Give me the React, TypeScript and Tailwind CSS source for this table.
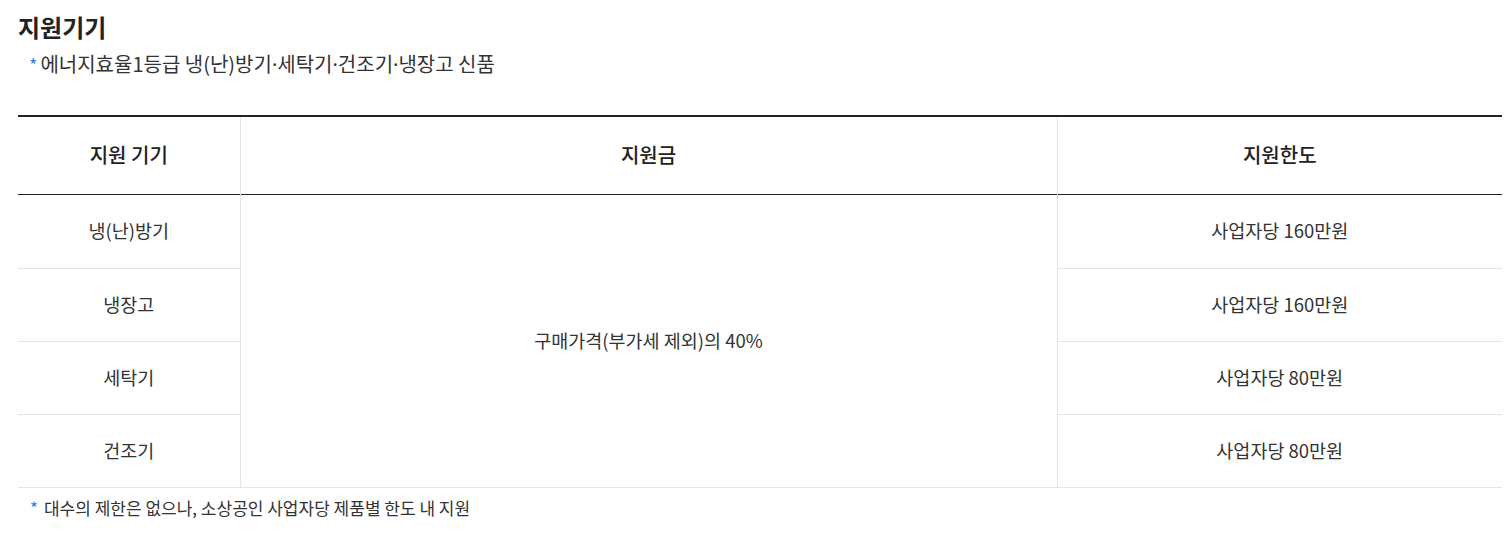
const rows = [
  { device: "냉(난)방기", limit: "사업자당 160만원" },
  { device: "냉장고", limit: "사업자당 160만원" },
  { device: "세탁기", limit: "사업자당 80만원" },
  { device: "건조기", limit: "사업자당 80만원" },
];

// narrow middle dot (the CJK one is full width)
const Dot = () => <span style={{ fontFamily: '"Noto Sans", sans-serif' }}>·</span>;

export default function App() {
  return (
    <div
      className="bg-white pl-[18px] pr-[10px] text-[#222]"
      style={{ fontFamily: '"Noto Sans CJK KR", "Noto Sans", sans-serif' }}
    >
      <h2 className="pt-[10px] text-[24px] font-bold leading-[34px]">지원기기</h2>
      <p className="mt-[7px] pl-[11px] text-[20px] leading-[26px] text-[#333]">
        <span className="mr-[3px] text-[18px] text-[#2f7fe6]">*</span>
        에너지효율1등급 냉(난)방기<Dot />세탁기<Dot />건조기<Dot />냉장고 신품
      </p>

      <table className="mt-[37px] w-full table-fixed border-collapse border-t-2 border-[#222] text-center">
        <colgroup>
          <col className="w-[222px]" />
          <col className="w-[817px]" />
          <col className="w-[445px]" />
        </colgroup>
        <thead>
          <tr className="h-[78px] border-b border-[#222] text-[20px]">
            <th className="font-medium">지원 기기</th>
            <th className="border-l border-[#e5e5e5] font-medium">지원금</th>
            <th className="border-l border-[#e5e5e5] font-medium">지원한도</th>
          </tr>
        </thead>
        <tbody className="text-[18.5px] text-[#333]">
          {rows.map((row, i) => (
            <tr
              key={row.device}
              className={`${i === 0 ? "h-[74px]" : "h-[73px]"} border-b border-[#e5e5e5]`}
            >
              <td>{row.device}</td>
              {i === 0 && (
                <td rowSpan={4} className="border-l border-[#e5e5e5]">
                  구매가격(부가세 제외)의 40%
                </td>
              )}
              <td className="border-l border-[#e5e5e5]">{row.limit}</td>
            </tr>
          ))}
        </tbody>
      </table>

      <p className="mt-[8px] pl-[12px] text-[17px] leading-[24px] text-[#333]">
        <span className="mr-[6px] text-[#2f7fe6]">*</span>
        대수의 제한은 없으나, 소상공인 사업자당 제품별 한도 내 지원
      </p>
      <div className="h-[25px]" />
    </div>
  );
}
